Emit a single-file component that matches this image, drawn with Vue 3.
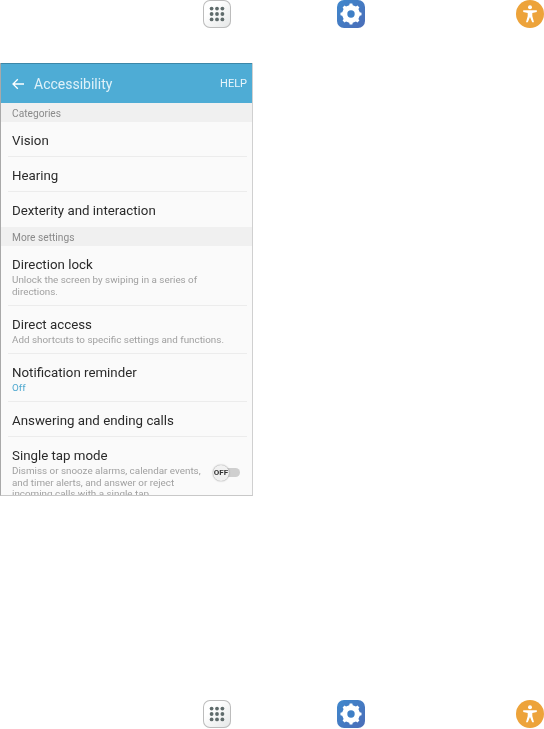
<template>
  <div class="page">
    <div class="icon-row top">
      <span class="icon apps">
        <svg viewBox="0 0 28 28" width="28" height="28"><circle v-for="d in dots" :key="d.k" :cx="d.x" :cy="d.y" r="1.9" fill="#5f6b6b" /></svg>
      </span>
      <span class="icon gear">
        <svg viewBox="0 0 28 28" width="28" height="28"><path :d="gearPath" fill="#fff" /><circle cx="14" cy="14" r="3.7" fill="#3f7fc6" /></svg>
      </span>
      <span class="icon person">
        <svg viewBox="0 0 28 28" width="28" height="28"><circle cx="14" cy="7.3" r="2" fill="#fff" /><path d="M7.2 10.2 L20.8 10.2 L20.8 11.9 L16.3 12.9 L16.3 16 L18 22.3 L16.2 22.3 L14 16.9 L11.8 22.3 L10 22.3 L11.7 16 L11.7 12.9 L7.2 11.9 Z" fill="#fff" /></svg>
      </span>
    </div>

    <div class="phone">
      <header class="bar">
        <svg class="back" viewBox="0 0 12 12" width="12" height="12"><path d="M12 6 H1.2 M5.8 1.2 L1 6 L5.8 10.8" fill="none" stroke="#fff" stroke-width="1.3" /></svg>
        <span class="bar-title">Accessibility</span>
        <span class="help">HELP</span>
      </header>

      <div class="band">Categories</div>
      <div class="row one">Vision</div>
      <div class="row one">Hearing</div>
      <div class="row one last">Dexterity and interaction</div>

      <div class="band">More settings</div>
      <div class="row lock">
        <div class="name">Direction lock</div>
        <div class="sub">Unlock the screen by swiping in a series of<br />directions.</div>
      </div>
      <div class="row two">
        <div class="name">Direct access</div>
        <div class="sub">Add shortcuts to specific settings and functions.</div>
      </div>
      <div class="row two">
        <div class="name">Notification reminder</div>
        <div class="sub blue">Off</div>
      </div>
      <div class="row one">Answering and ending calls</div>
      <div class="row tap">
        <div class="tap-text">
          <div class="name">Single tap mode</div>
          <div class="sub">Dismiss or snooze alarms, calendar events,<br />and timer alerts, and answer or reject<br />incoming calls with a single tap.</div>
        </div>
        <div class="toggle"><span class="knob">OFF</span></div>
      </div>
    </div>

    <div class="icon-row bottom">
      <span class="icon apps">
        <svg viewBox="0 0 28 28" width="28" height="28"><circle v-for="d in dots" :key="d.k" :cx="d.x" :cy="d.y" r="1.9" fill="#5f6b6b" /></svg>
      </span>
      <span class="icon gear">
        <svg viewBox="0 0 28 28" width="28" height="28"><path :d="gearPath" fill="#fff" /><circle cx="14" cy="14" r="3.7" fill="#3f7fc6" /></svg>
      </span>
      <span class="icon person">
        <svg viewBox="0 0 28 28" width="28" height="28"><circle cx="14" cy="7.3" r="2" fill="#fff" /><path d="M7.2 10.2 L20.8 10.2 L20.8 11.9 L16.3 12.9 L16.3 16 L18 22.3 L16.2 22.3 L14 16.9 L11.8 22.3 L10 22.3 L11.7 16 L11.7 12.9 L7.2 11.9 Z" fill="#fff" /></svg>
      </span>
    </div>
  </div>
</template>

<script setup>
const dots = []
for (const y of [8.6, 14, 19.4]) {
  for (const x of [8.6, 14, 19.4]) dots.push({ k: x + '-' + y, x, y })
}

// eight toothed cog around the centre of the tile
function cog() {
  const pts = []
  const teeth = 8
  for (let i = 0; i < teeth; i++) {
    const a = (i * Math.PI * 2) / teeth - Math.PI / 2
    const step = Math.PI / teeth
    const list = [
      [a - step * 0.5, 8.9],
      [a - step * 0.32, 10.6],
      [a + step * 0.32, 10.6],
      [a + step * 0.5, 8.9],
    ]
    for (const [t, r] of list) {
      pts.push((14 + r * Math.cos(t)).toFixed(2) + ' ' + (14 + r * Math.sin(t)).toFixed(2))
    }
  }
  return 'M' + pts.join(' L') + ' Z'
}
const gearPath = cog()
</script>

<style>
body {
  background: #fff;
}
</style>

<style scoped>
.page {
  width: 544px;
  height: 729px;
  display: flex;
  flex-direction: column;
  background: #fff;
  font-family: Roboto, "Liberation Sans", sans-serif;
  overflow: hidden;
}

.icon-row {
  display: flex;
  height: 28px;
  padding-left: 203px;
  filter: blur(0.3px);
}

.icon-row.top {
  margin-bottom: 35px;
}

.icon-row.bottom {
  margin-top: 204px;
}

.icon {
  display: block;
  width: 28px;
  height: 28px;
  box-sizing: border-box;
  flex: none;
}

.icon svg {
  display: block;
}

.apps {
  border-radius: 7px;
  background: linear-gradient(135deg, #fff 30%, #e4e6e6 100%);
  box-shadow: inset 0 0 0 1px #bcbcbc;
}

.gear {
  margin-left: 106px;
  border-radius: 7px;
  background: linear-gradient(135deg, #3f88cd, #4b6db8);
}

.person {
  margin-left: 151px;
  border-radius: 50%;
  background: #eda33a;
}

.phone {
  width: 253px;
  height: 433px;
  box-sizing: border-box;
  overflow: hidden;
  background: #fafafa;
  border-left: 1px solid #a9a9a9;
  border-right: 1px solid #d0d0d0;
  border-bottom: 1px solid #c8c8c8;
  display: flex;
  flex-direction: column;
  filter: blur(0.3px);
}

.bar {
  height: 40px;
  flex: none;
  margin: 0 -1px;
  display: flex;
  align-items: center;
  background: #4eacd5;
  border-top: 1px solid #3c87a8;
  box-sizing: border-box;
  color: #fff;
  padding: 0 6px 0 12px;
}

.back {
  flex: none;
}

.bar-title {
  margin-left: 10px;
  font-size: 14px;
  color: #dff1f9;
  flex: 1;
}

.help {
  font-size: 11px;
  color: #e8f5fb;
}

.band {
  height: 19px;
  flex: none;
  box-sizing: border-box;
  background: #f0f0f0;
  color: #8a8a8a;
  font-size: 10.2px;
  line-height: 21px;
  padding-left: 11px;
}

.row {
  flex: none;
  box-sizing: border-box;
  margin: 0 5px 0 7px;
  padding-left: 4px;
  color: #2a2a2a;
  border-bottom: 1px solid #ececec;
}

.row.last {
  border-bottom: none;
}

.row.one {
  height: 35px;
  line-height: 37px;
  font-size: 13.3px;
}

.row.lock {
  height: 60px;
  padding-top: 11px;
}

.row.two {
  height: 48px;
  padding-top: 11px;
}

.row.tap {
  height: 59px;
  padding-top: 11px;
  border-bottom: none;
  display: flex;
}

.tap-text {
  width: 202px;
  flex: none;
}

.name {
  font-size: 13.3px;
  line-height: 15px;
}

.sub {
  font-size: 9.85px;
  line-height: 11.6px;
  margin-top: 2px;
  color: #a0a0a0;
  white-space: nowrap;
}

.sub.blue {
  color: #4ea8cf;
}

.toggle {
  position: relative;
  width: 26px;
  height: 9px;
  margin-top: 20px;
  background: #cfcfcf;
  border-radius: 4.5px;
  flex: none;
}

.knob {
  position: absolute;
  left: -1px;
  top: -3.5px;
  width: 16px;
  height: 16px;
  border-radius: 50%;
  background: #f1f1f1;
  box-shadow: 0 0 1.5px #777;
  font-size: 8px;
  font-weight: 700;
  line-height: 16px;
  text-align: center;
  color: #333;
}
</style>
